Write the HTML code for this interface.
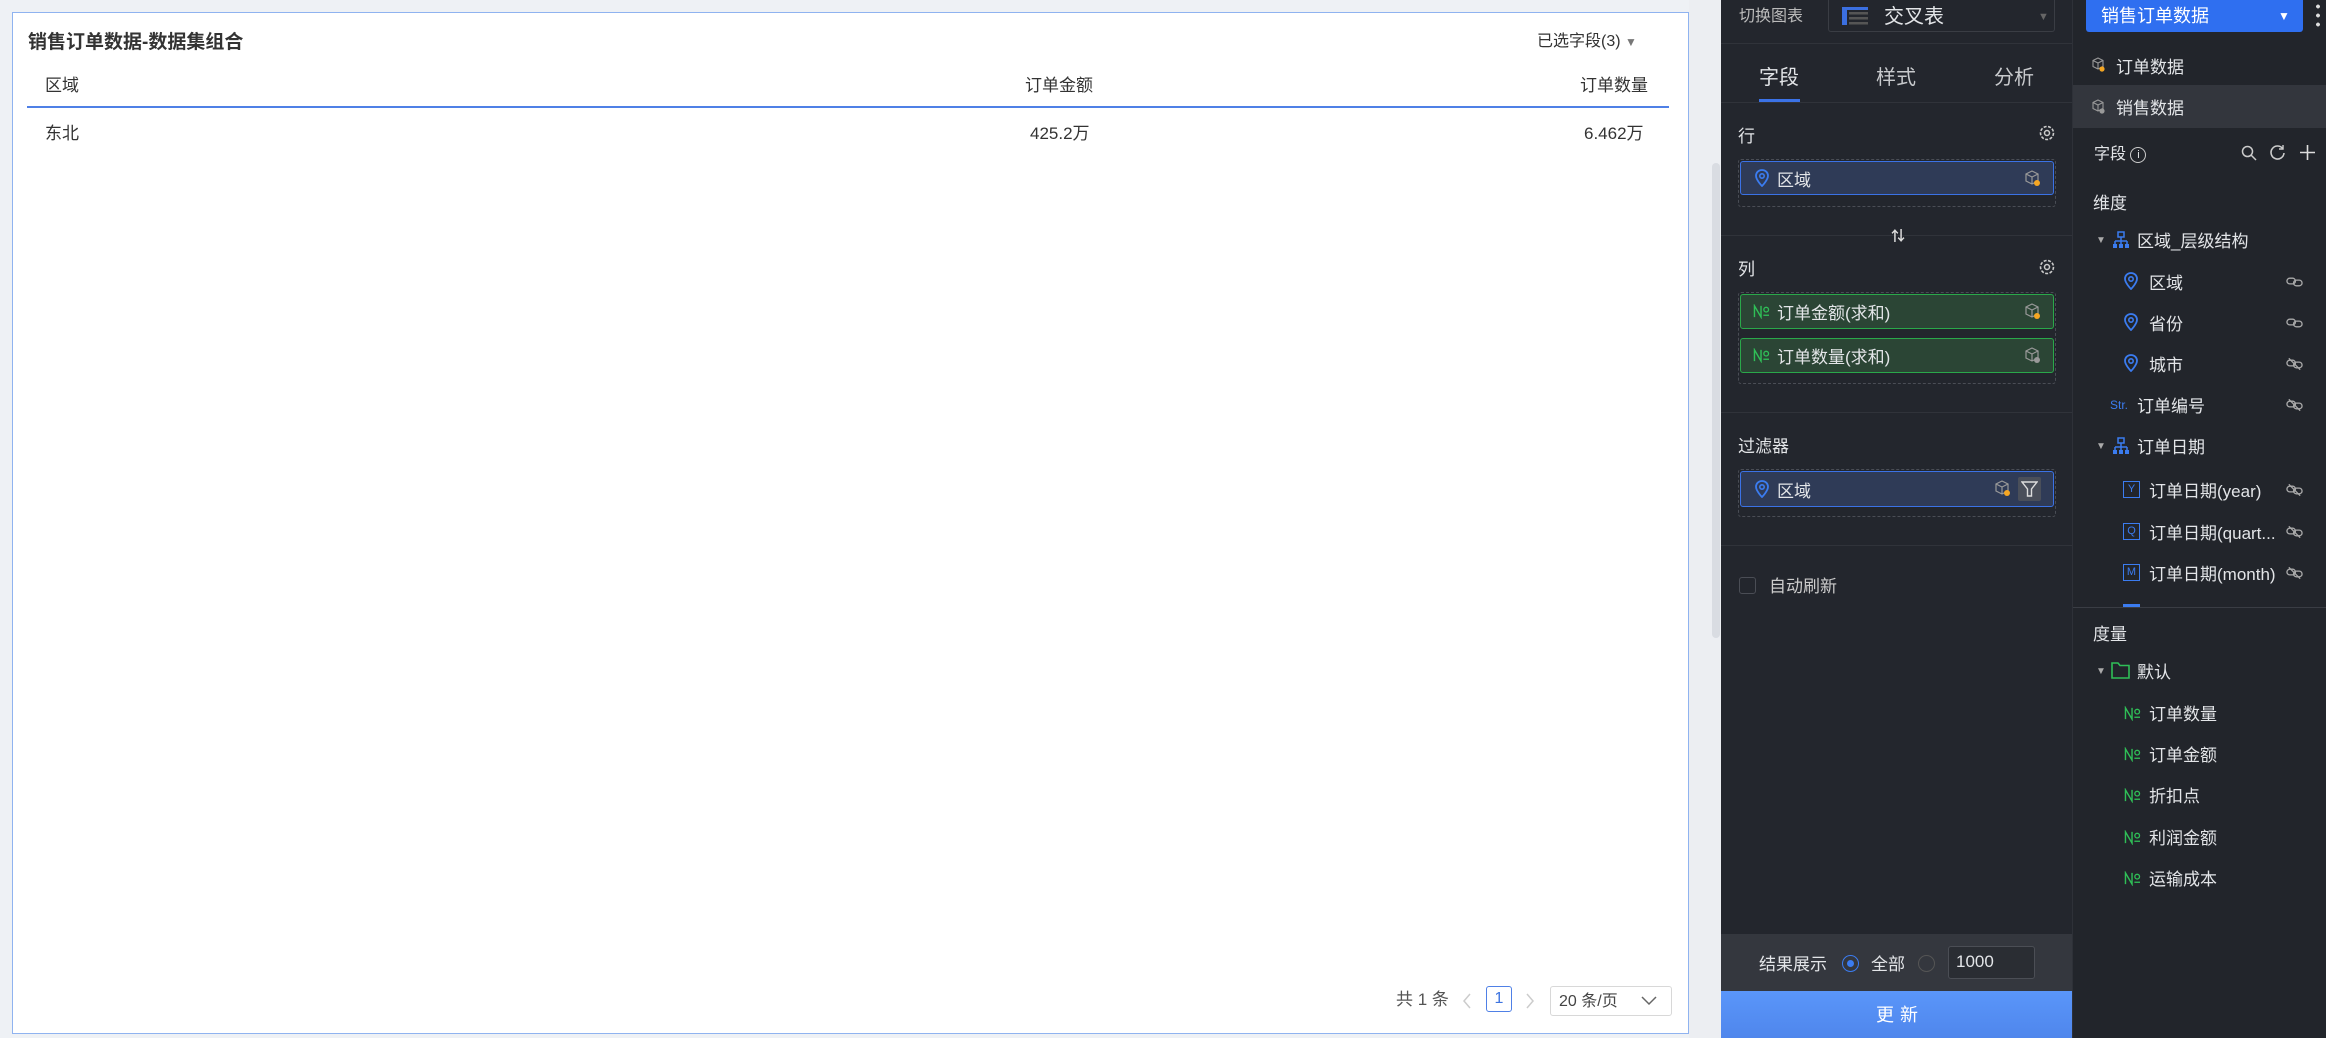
<!DOCTYPE html>
<html><head><meta charset="utf-8">
<style>
*{box-sizing:border-box;margin:0;padding:0}
body{width:2326px;height:1038px;overflow:hidden;background:#eef1f5;font-family:"Liberation Sans","Noto Sans CJK SC",sans-serif;position:relative;line-height:1.7}
.a{position:absolute;white-space:nowrap}
.card{left:12px;top:12px;width:1677px;height:1022px;background:#fff;border:1px solid #8fb3f0}
.t{color:#333;font-size:17px}
.dk{left:1721px;top:0;width:351px;height:1038px;background:#23262d}
.rp{left:2072px;top:0;width:254px;height:1038px;background:#22252b;border-left:1px solid #2e3138}
.w{color:#e3e5e8;font-size:17px}
.hl{height:1px;background:#30333a}
.cont{border:1px dashed #4a4d55;border-radius:3px}
.pb{background:#2f3b57;border:1.5px solid #3b72e6;border-radius:3px}
.pg{background:#2b4535;border:1.5px solid #2aa84a;border-radius:3px}
</style></head><body>
<svg width="0" height="0" style="position:absolute">
<defs>
<symbol id="lk" viewBox="0 0 18 12"><rect x="1" y="2" width="9" height="6" rx="3" fill="none" stroke="#aaa" stroke-width="1.4"/><rect x="8" y="4" width="9" height="6" rx="3" fill="none" stroke="#aaa" stroke-width="1.4"/></symbol>
<symbol id="bl" viewBox="0 0 18 14"><rect x="1" y="3" width="9" height="6" rx="3" fill="none" stroke="#aaa" stroke-width="1.4"/><rect x="8" y="5" width="9" height="6" rx="3" fill="none" stroke="#aaa" stroke-width="1.4"/><path d="M3 1l12 12" stroke="#aaa" stroke-width="1.4"/></symbol>
<symbol id="no" viewBox="0 0 18 16"><path d="M1.5 14V2l7 12V2" fill="none" stroke="#2fbf57" stroke-width="1.5"/><circle cx="14" cy="6" r="2.5" fill="none" stroke="#2fbf57" stroke-width="1.4"/><path d="M11 12h6" stroke="#2fbf57" stroke-width="1.4"/></symbol>
</defs></svg>
<div class="a card"></div>
<div class="a" style="left:28px;top:27px;font-size:19px;font-weight:bold;color:#333">销售订单数据-数据集组合</div>
<div class="a t" style="left:1537px;top:28px;font-size:16px">已选字段(3) <span style="color:#777;font-size:12px">▼</span></div>
<div class="a t" style="left:45px;top:72px">区域</div>
<div class="a t" style="left:1025px;top:72px">订单金额</div>
<div class="a t" style="left:1580px;top:72px">订单数量</div>
<div class="a" style="left:27px;top:106px;width:1642px;height:2px;background:#4f80e6"></div>
<div class="a t" style="left:45px;top:120px">东北</div>
<div class="a t" style="left:1030px;top:120px">425.2万</div>
<div class="a t" style="left:1584px;top:120px">6.462万</div>
<div class="a" style="left:1689px;top:0;width:32px;height:1038px;background:#eceef2"></div>
<div class="a" style="left:1712px;top:163px;width:8px;height:475px;background:#d9dce2;border-radius:4px"></div>
<div class="a t" style="left:1396px;top:986px;color:#555">共 1 条</div>
<svg class="a" style="left:1462px;top:993px" width="10" height="16"><path d="M8 1L2 8l6 7" fill="none" stroke="#ccc" stroke-width="1.5"/></svg>
<div class="a" style="left:1486px;top:986px;width:26px;height:26px;border:1px solid #4f80e6;border-radius:3px;color:#3e74e0;font-size:16px;text-align:center;line-height:24px">1</div>
<svg class="a" style="left:1525px;top:993px" width="10" height="16"><path d="M2 1l6 7-6 7" fill="none" stroke="#ccc" stroke-width="1.5"/></svg>
<div class="a" style="left:1550px;top:986px;width:122px;height:30px;border:1px solid #d8d8d8;border-radius:3px;color:#444;font-size:16px;padding:4px 0 0 8px;line-height:22px">20 条/页</div>
<svg class="a" style="left:1641px;top:996px" width="16" height="10"><path d="M1 1l7 7 7-7" fill="none" stroke="#666" stroke-width="1.5"/></svg>

<div class="a dk"></div>
<div class="a" style="left:1739px;top:3px;color:#bbb;font-size:16px">切换图表</div>
<div class="a" style="left:1828px;top:0;width:227px;height:32px;border:1px solid #3a3d44;border-top:none;border-radius:0 0 3px 3px"></div>
<svg class="a" style="left:1842px;top:7px" width="26" height="18"><rect x="0" y="0" width="26" height="3" fill="#3b6fe0"/><rect x="0" y="0" width="5" height="18" fill="#3b6fe0"/><rect x="7" y="5" width="19" height="2.5" fill="#555"/><rect x="7" y="10" width="19" height="2.5" fill="#555"/><rect x="7" y="15" width="19" height="2.5" fill="#555"/></svg>
<div class="a w" style="left:1884px;top:0px;font-size:20px">交叉表</div>
<div class="a" style="left:2038px;top:8px;color:#666;font-size:11px">▼</div>
<div class="a hl" style="left:1721px;top:43px;width:351px"></div>
<div class="a w" style="left:1759px;top:61px;font-size:20px">字段</div>
<div class="a" style="left:1876px;top:61px;color:#c8cacd;font-size:20px">样式</div>
<div class="a" style="left:1994px;top:61px;color:#c8cacd;font-size:20px">分析</div>
<div class="a" style="left:1759px;top:99px;width:41px;height:3px;background:#3b72e6"></div>
<div class="a hl" style="left:1721px;top:102px;width:351px"></div>

<div class="a w" style="left:1738px;top:123px">行</div>
<svg class="a" style="left:2038px;top:124px" width="18" height="18"><circle cx="9" cy="9" r="6.5" fill="none" stroke="#ccc" stroke-width="1.6" stroke-dasharray="3 1.5"/><circle cx="9" cy="9" r="2.5" fill="none" stroke="#ccc" stroke-width="1.5"/></svg>
<div class="a cont" style="left:1738px;top:159px;width:318px;height:48px"></div>
<div class="a pb" style="left:1740px;top:161px;width:314px;height:34px"></div>
<svg class="a" style="left:1755px;top:169px" width="14" height="18"><path d="M7 1C3.5 1 1 3.6 1 6.8 1 11 7 17 7 17s6-6 6-10.2C13 3.6 10.5 1 7 1z" fill="none" stroke="#3b7cf0" stroke-width="1.8"/><circle cx="7" cy="7" r="2.2" fill="none" stroke="#3b7cf0" stroke-width="1.6"/></svg>
<div class="a w" style="left:1777px;top:167px">区域</div>
<svg class="a" style="left:2024px;top:170px" width="18" height="18"><path d="M8 1l6 3v7l-6 3-6-3V4z M2 4l6 3 6-3 M8 7v7" fill="none" stroke="#999" stroke-width="1.2"/><circle cx="13" cy="13" r="3" fill="#f5a623"/></svg>

<div class="a hl" style="left:1721px;top:235px;width:351px"></div>
<div class="a" style="left:1891px;top:225px;color:#ddd;font-size:14px;font-weight:bold">⇅</div>
<div class="a w" style="left:1738px;top:256px">列</div>
<svg class="a" style="left:2038px;top:258px" width="18" height="18"><circle cx="9" cy="9" r="6.5" fill="none" stroke="#ccc" stroke-width="1.6" stroke-dasharray="3 1.5"/><circle cx="9" cy="9" r="2.5" fill="none" stroke="#ccc" stroke-width="1.5"/></svg>
<div class="a cont" style="left:1738px;top:292px;width:318px;height:92px"></div>
<div class="a pg" style="left:1740px;top:294px;width:314px;height:35px"></div>
<div class="a pg" style="left:1740px;top:338px;width:314px;height:35px"></div>
<svg class="a" style="left:1753px;top:304px" width="17" height="15"><use href="#no"/></svg>
<div class="a w" style="left:1777px;top:300px">订单金额(求和)</div>
<svg class="a" style="left:1753px;top:348px" width="17" height="15"><use href="#no"/></svg>
<div class="a w" style="left:1777px;top:344px">订单数量(求和)</div>
<svg class="a" style="left:2024px;top:303px" width="18" height="18"><path d="M8 1l6 3v7l-6 3-6-3V4z M2 4l6 3 6-3 M8 7v7" fill="none" stroke="#999" stroke-width="1.2"/><circle cx="13" cy="13" r="3" fill="#f5a623"/></svg>
<svg class="a" style="left:2024px;top:347px" width="18" height="18"><path d="M8 1l6 3v7l-6 3-6-3V4z M2 4l6 3 6-3 M8 7v7" fill="none" stroke="#999" stroke-width="1.2"/><circle cx="13" cy="13" r="3" fill="#999"/></svg>

<div class="a hl" style="left:1721px;top:412px;width:351px"></div>
<div class="a w" style="left:1738px;top:433px">过滤器</div>
<div class="a cont" style="left:1738px;top:469px;width:318px;height:48px"></div>
<div class="a pb" style="left:1740px;top:471px;width:314px;height:36px"></div>
<svg class="a" style="left:1755px;top:480px" width="14" height="18"><path d="M7 1C3.5 1 1 3.6 1 6.8 1 11 7 17 7 17s6-6 6-10.2C13 3.6 10.5 1 7 1z" fill="none" stroke="#3b7cf0" stroke-width="1.8"/><circle cx="7" cy="7" r="2.2" fill="none" stroke="#3b7cf0" stroke-width="1.6"/></svg>
<div class="a w" style="left:1777px;top:478px">区域</div>
<svg class="a" style="left:1994px;top:480px" width="18" height="18"><path d="M8 1l6 3v7l-6 3-6-3V4z M2 4l6 3 6-3 M8 7v7" fill="none" stroke="#999" stroke-width="1.2"/><circle cx="13" cy="13" r="3" fill="#f5a623"/></svg>
<div class="a" style="left:2018px;top:477px;width:23px;height:24px;background:#4a4f5a;border-radius:2px"></div>
<svg class="a" style="left:2021px;top:481px" width="17" height="16"><path d="M1 1h15l-5.5 7v7h-4V8z" fill="none" stroke="#ddd" stroke-width="1.4"/></svg>
<div class="a hl" style="left:1721px;top:545px;width:351px"></div>
<div class="a" style="left:1739px;top:577px;width:17px;height:17px;border:1.5px solid #4a4d55;border-radius:3px"></div>
<div class="a" style="left:1769px;top:573px;color:#ccc;font-size:17px">自动刷新</div>

<div class="a" style="left:1721px;top:934px;width:351px;height:57px;background:#34373e"></div>
<div class="a w" style="left:1759px;top:951px">结果展示</div>
<div class="a" style="left:1842px;top:955px;width:17px;height:17px;border:1.5px solid #3b7cf0;border-radius:50%"></div>
<div class="a" style="left:1847px;top:960px;width:7px;height:7px;background:#3b7cf0;border-radius:50%"></div>
<div class="a w" style="left:1871px;top:951px">全部</div>
<div class="a" style="left:1918px;top:955px;width:17px;height:17px;border:1.5px solid #555;border-radius:50%"></div>
<div class="a" style="left:1948px;top:946px;width:87px;height:33px;border:1px solid #4b4e55;border-radius:3px;background:#2a2d33"></div>
<div class="a w" style="left:1956px;top:948px">1000</div>
<div class="a" style="left:1721px;top:991px;width:351px;height:47px;background:linear-gradient(#5a96fa,#4f86ec)"></div>
<div class="a" style="left:1876px;top:1000px;color:#fff;font-size:18px;letter-spacing:6px">更新</div>

<div class="a rp"></div>
<div class="a" style="left:2086px;top:0;width:217px;height:32px;background:#2f6ff0;border-radius:0 0 3px 3px"></div>
<div class="a" style="left:2101px;top:1px;color:#fff;font-size:18px">销售订单数据</div>
<div class="a" style="left:2278px;top:6px;color:#fff;font-size:12px">▼</div>
<div class="a" style="left:2316px;top:2px;width:4px;height:26px;background:radial-gradient(circle,#ddd 1.8px,transparent 2px) 0 0/4px 9px"></div>
<svg class="a" style="left:2091px;top:57px" width="16" height="16"><path d="M7 1l5 2.5v6L7 12 2 9.5v-6z M2 3.5L7 6l5-2.5 M7 6v6" fill="none" stroke="#999" stroke-width="1.1"/><circle cx="11" cy="12" r="2.6" fill="#f5a623"/></svg>
<div class="a w" style="left:2116px;top:54px">订单数据</div>
<div class="a" style="left:2073px;top:85px;width:253px;height:43px;background:#33363d"></div>
<svg class="a" style="left:2091px;top:99px" width="16" height="16"><path d="M7 1l5 2.5v6L7 12 2 9.5v-6z M2 3.5L7 6l5-2.5 M7 6v6" fill="none" stroke="#999" stroke-width="1.1"/><circle cx="11" cy="12" r="2.6" fill="#999"/></svg>
<div class="a w" style="left:2116px;top:95px">销售数据</div>
<div class="a w" style="left:2094px;top:141px;font-size:16px">字段 <span style="display:inline-block;width:16px;height:16px;border:1.3px solid #ccc;border-radius:50%;font-size:11px;text-align:center;line-height:14px;vertical-align:1px">i</span></div>
<svg class="a" style="left:2241px;top:145px" width="16" height="16"><circle cx="6.5" cy="6.5" r="5" fill="none" stroke="#ccc" stroke-width="1.5"/><path d="M10 10l5 5" stroke="#ccc" stroke-width="1.5"/></svg>
<svg class="a" style="left:2269px;top:144px" width="17" height="17"><path d="M14 5A6.5 6.5 0 1 0 15 9" fill="none" stroke="#ccc" stroke-width="1.6"/><path d="M14 1v4h-4" fill="none" stroke="#ccc" stroke-width="1.4"/></svg>
<svg class="a" style="left:2299px;top:144px" width="17" height="17"><path d="M8.5 1v15M1 8.5h15" stroke="#ddd" stroke-width="1.6"/></svg>
<div class="a w" style="left:2093px;top:190px">维度</div>

<div class="a" style="left:2096px;top:232px;color:#aaa;font-size:10px">▼</div>
<svg class="a" style="left:2112px;top:231px" width="18" height="18"><rect x="6" y="1" width="6" height="5" fill="none" stroke="#3b7cf0" stroke-width="1.5"/><path d="M9 6v4M3 10h12M3 10v3M9 10v3M15 10v3" stroke="#3b7cf0" stroke-width="1.5"/><rect x="1" y="13" width="4" height="4" fill="#3b7cf0"/><rect x="7" y="13" width="4" height="4" fill="#3b7cf0"/><rect x="13" y="13" width="4" height="4" fill="#3b7cf0"/></svg>
<div class="a w" style="left:2137px;top:228px">区域_层级结构</div>

<svg class="a" style="left:2124px;top:272px" width="14" height="18"><path d="M7 1C3.5 1 1 3.6 1 6.8 1 11 7 17 7 17s6-6 6-10.2C13 3.6 10.5 1 7 1z" fill="none" stroke="#3b7cf0" stroke-width="1.8"/><circle cx="7" cy="7" r="2.2" fill="none" stroke="#3b7cf0" stroke-width="1.6"/></svg>
<div class="a w" style="left:2149px;top:270px">区域</div>
<svg class="a" style="left:2286px;top:276px" width="17" height="12"><use href="#lk"/></svg>
<svg class="a" style="left:2124px;top:313px" width="14" height="18"><path d="M7 1C3.5 1 1 3.6 1 6.8 1 11 7 17 7 17s6-6 6-10.2C13 3.6 10.5 1 7 1z" fill="none" stroke="#3b7cf0" stroke-width="1.8"/><circle cx="7" cy="7" r="2.2" fill="none" stroke="#3b7cf0" stroke-width="1.6"/></svg>
<div class="a w" style="left:2149px;top:311px">省份</div>
<svg class="a" style="left:2286px;top:317px" width="17" height="12"><use href="#lk"/></svg>
<svg class="a" style="left:2124px;top:354px" width="14" height="18"><path d="M7 1C3.5 1 1 3.6 1 6.8 1 11 7 17 7 17s6-6 6-10.2C13 3.6 10.5 1 7 1z" fill="none" stroke="#3b7cf0" stroke-width="1.8"/><circle cx="7" cy="7" r="2.2" fill="none" stroke="#3b7cf0" stroke-width="1.6"/></svg>
<div class="a w" style="left:2149px;top:352px">城市</div>
<svg class="a" style="left:2286px;top:357px" width="17" height="14"><use href="#bl"/></svg>
<div class="a" style="left:2110px;top:395px;color:#3b7cf0;font-size:12px">Str.</div>
<div class="a w" style="left:2137px;top:393px">订单编号</div>
<svg class="a" style="left:2286px;top:398px" width="17" height="14"><use href="#bl"/></svg>
<div class="a" style="left:2096px;top:438px;color:#aaa;font-size:10px">▼</div>
<svg class="a" style="left:2112px;top:437px" width="18" height="18"><rect x="6" y="1" width="6" height="5" fill="none" stroke="#3b7cf0" stroke-width="1.5"/><path d="M9 6v4M3 10h12M3 10v3M9 10v3M15 10v3" stroke="#3b7cf0" stroke-width="1.5"/><rect x="1" y="13" width="4" height="4" fill="#3b7cf0"/><rect x="7" y="13" width="4" height="4" fill="#3b7cf0"/><rect x="13" y="13" width="4" height="4" fill="#3b7cf0"/></svg>
<div class="a w" style="left:2137px;top:434px">订单日期</div>
<div class="a" style="left:2123px;top:481px;width:17px;height:17px;border:1.5px solid #3b7cf0;color:#3b7cf0;font-size:11px;text-align:center;line-height:14px">Y</div>
<div class="a w" style="left:2149px;top:478px">订单日期(year)</div>
<svg class="a" style="left:2286px;top:483px" width="17" height="14"><use href="#bl"/></svg>
<div class="a" style="left:2123px;top:523px;width:17px;height:17px;border:1.5px solid #3b7cf0;color:#3b7cf0;font-size:11px;text-align:center;line-height:14px">Q</div>
<div class="a w" style="left:2149px;top:520px">订单日期(quart...</div>
<svg class="a" style="left:2286px;top:525px" width="17" height="14"><use href="#bl"/></svg>
<div class="a" style="left:2123px;top:564px;width:17px;height:17px;border:1.5px solid #3b7cf0;color:#3b7cf0;font-size:11px;text-align:center;line-height:14px">M</div>
<div class="a w" style="left:2149px;top:561px">订单日期(month)</div>
<svg class="a" style="left:2286px;top:566px" width="17" height="14"><use href="#bl"/></svg>
<div class="a" style="left:2123px;top:604px;width:17px;height:3px;background:#3b7cf0"></div>
<div class="a" style="left:2073px;top:607px;width:253px;height:1px;background:#3a3d44"></div>
<div class="a w" style="left:2093px;top:621px">度量</div>
<div class="a" style="left:2096px;top:663px;color:#aaa;font-size:10px">▼</div>
<svg class="a" style="left:2111px;top:662px" width="19" height="17"><path d="M1 1h6l2 2.5h9V16H1z" fill="none" stroke="#2fbf57" stroke-width="1.6"/></svg>
<div class="a w" style="left:2137px;top:659px">默认</div>
<svg class="a" style="left:2124px;top:706px" width="17" height="15"><use href="#no"/></svg><div class="a w" style="left:2149px;top:701px">订单数量</div>
<svg class="a" style="left:2124px;top:747px" width="17" height="15"><use href="#no"/></svg><div class="a w" style="left:2149px;top:742px">订单金额</div>
<svg class="a" style="left:2124px;top:788px" width="17" height="15"><use href="#no"/></svg><div class="a w" style="left:2149px;top:783px">折扣点</div>
<svg class="a" style="left:2124px;top:830px" width="17" height="15"><use href="#no"/></svg><div class="a w" style="left:2149px;top:825px">利润金额</div>
<svg class="a" style="left:2124px;top:871px" width="17" height="15"><use href="#no"/></svg><div class="a w" style="left:2149px;top:866px">运输成本</div>
</body></html>
